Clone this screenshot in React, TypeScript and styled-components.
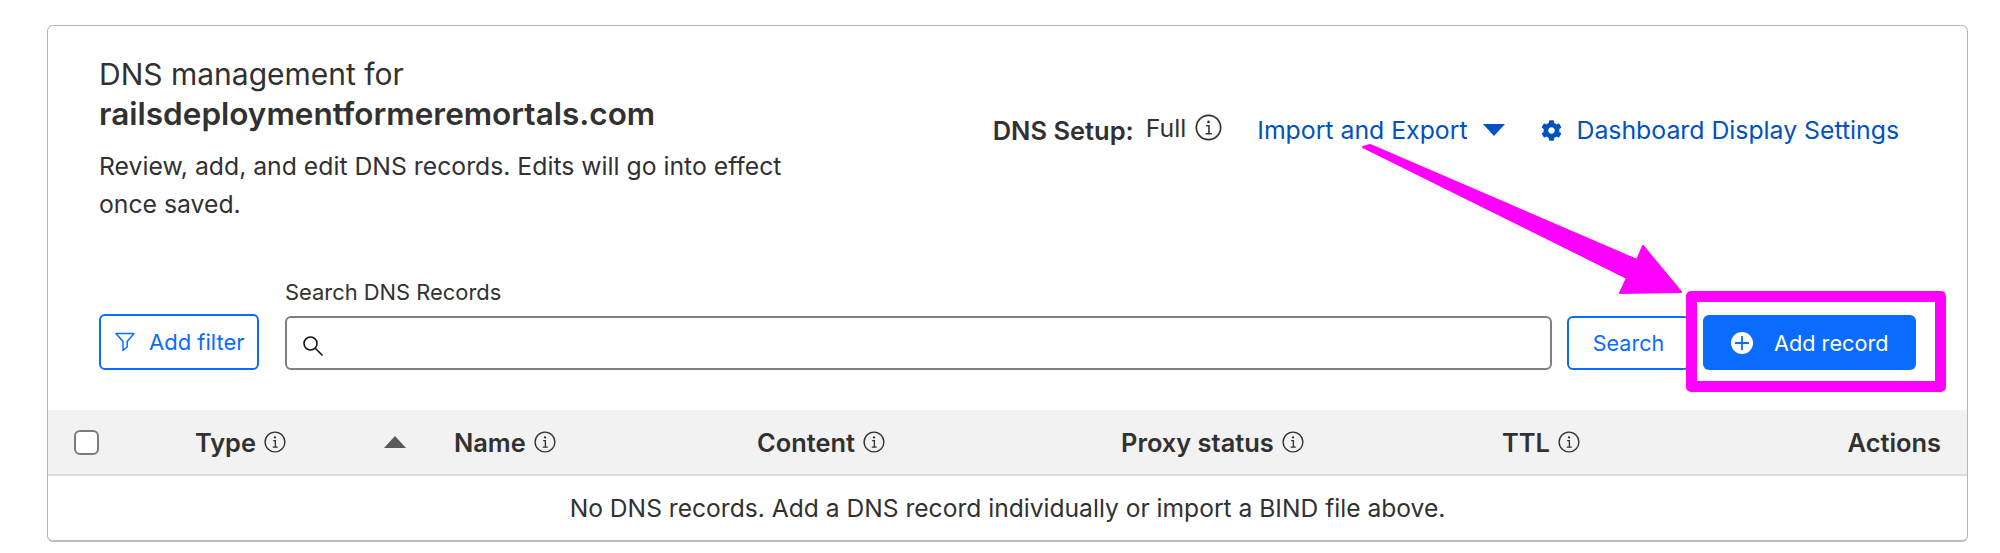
import React from "react";
import styled, { createGlobalStyle } from "styled-components";
import { FaCog } from "react-icons/fa";

const Global = createGlobalStyle`
  html, body { margin: 0; padding: 0; background: #fff; }
  body { font-family: Inter, "Liberation Sans", sans-serif; color: #313131; }
`;
const Page = styled.div`
  position: relative;
  width: 2000px;
  height: 553px;
  padding: 25px 32px 0 47px;
  box-sizing: border-box;
  overflow: hidden;
`;
const Card = styled.section`
  width: 1921px;
  height: 517px;
  box-sizing: border-box;
  border: 1px solid #b4b4b4;
  border-bottom: 2px solid #bcbcbc;
  border-radius: 6px;
  display: flex;
  flex-direction: column;
`;
const Header = styled.header`
  height: 188px;
  box-sizing: border-box;
  padding: 28px 68px 0 51px;
  display: flex;
  justify-content: space-between;
`;
const TitleBlock = styled.div`
  width: 700px;
`;
const Title = styled.h2`
  margin: 0 0 13px;
  font-size: 30px;
  line-height: 40px;
  font-weight: 400;
`;
const Domain = styled.strong`
  display: block;
  font-size: 31.5px;
  font-weight: 600;
`;
const Description = styled.p`
  margin: 0;
  font-size: 24.75px;
  line-height: 38px;
`;
const HeaderActions = styled.div`
  display: flex;
  align-items: center;
  height: 30px;
  margin-top: 61px;
  font-size: 24.8px;
`;
const SetupLabel = styled.span`
  font-size: 25.5px;
  font-weight: 600;
  margin-right: 12px;
`;
const SetupValue = styled.span`
  margin-right: 9px;
  margin-top: -4px;
`;
const SetupInfo = styled.span`
  display: flex;
  margin-right: 35px;
  margin-top: -6px;
`;
const LinkText = styled.a`
  color: #0051c3;
  display: flex;
  align-items: center;
`;
const Caret = styled.span`
  width: 0;
  height: 0;
  margin: 0 36px 0 15px;
  border-left: 11px solid transparent;
  border-right: 11px solid transparent;
  border-top: 12px solid #0051c3;
`;
const GearWrap = styled.span`
  display: flex;
  margin-right: 15px;
`;
const Toolbar = styled.div`
  height: 196px;
  box-sizing: border-box;
  padding: 0 51px;
  display: flex;
  gap: 13px;
  align-items: flex-start;
`;
const FilterButton = styled.button`
  width: 160px;
  height: 56px;
  margin: 100px 13px 0 0;
  background: #fff;
  border: 2px solid #0a6cff;
  border-radius: 6px;
  color: #0a6cff;
  font: 400 22px Inter, sans-serif;
  display: flex;
  align-items: center;
  gap: 14px;
  padding: 0 0 0 14px;
`;
const SearchField = styled.label`
  flex: 1;
  display: flex;
  flex-direction: column;
  font-size: 21.9px;
  margin-top: 60px;
`;
const SearchLabel = styled.span`
  line-height: 36px;
  margin-bottom: 6px;
`;
const SearchBox = styled.span`
  height: 54px;
  box-sizing: border-box;
  border: 2px solid #808080;
  border-radius: 6px;
  display: flex;
  align-items: center;
  padding: 5px 0 0 15px;
`;
const SearchButton = styled.button`
  width: 123px;
  height: 54px;
  margin: 102px 0 0 2px;
  background: #fff;
  border: 2px solid #0a6cff;
  border-radius: 6px;
  color: #0a6cff;
  font: 400 21.5px Inter, sans-serif;
  padding: 0;
`;
const AddButton = styled.button`
  position: relative;
  width: 213px;
  height: 55px;
  margin: 101px 0 0 0;
  background: #0a6cff;
  border: 0;
  border-radius: 6px;
  color: #fff;
  font: 400 21.7px Inter, sans-serif;
  display: flex;
  align-items: center;
  gap: 21px;
  padding: 0 0 0 28px;
`;
const Highlight = styled.span`
  position: absolute;
  inset: -24px -30px -22px -17px;
  border: 11px solid #ff00ff;
  border-radius: 5px;
  pointer-events: none;
`;
const TableHead = styled.div`
  height: 66px;
  box-sizing: border-box;
  background: #f2f2f2;
  border-bottom: 2px solid #dcdcdc;
  padding: 0 26px;
  display: grid;
  grid-template-columns: 121px 259px 303px 364px 381px 1fr auto;
  align-items: center;
  font-size: 25.4px;
  font-weight: 600;
`;
const Check = styled.span`
  width: 25px;
  height: 25px;
  box-sizing: border-box;
  border: 2px solid #7b7b7b;
  border-radius: 6px;
  background: #fff;
`;
const HeadCell = styled.div`
  display: flex;
  align-items: center;
  gap: 8px;
`;
const Sort = styled.span`
  width: 0;
  height: 0;
  margin-left: auto;
  margin-right: 48px;
  border-left: 11px solid transparent;
  border-right: 11px solid transparent;
  border-bottom: 12px solid #595959;
`;
const EmptyRow = styled.div`
  flex: 1;
  display: flex;
  align-items: center;
  justify-content: center;
  font-size: 24.6px;
`;
const ArrowLayer = styled.svg`
  position: absolute;
  left: 0;
  top: 0;
  pointer-events: none;
`;

const Info = ({ size = 22 }: { size?: number }) => (
  <svg width={size} height={size} viewBox="0 0 24 24" fill="none" stroke="#313131" strokeWidth="1.5">
    <circle cx="12" cy="12" r="10.8" />
    <path d="M10 10.5h2.4V17.5M9.5 17.5h5.5" strokeWidth="1.4" />
    <circle cx="12" cy="7" r="1.2" fill="#313131" stroke="none" />
  </svg>
);

const Column = ({ label }: { label: string }) => (
  <HeadCell>
    {label}
    <Info />
  </HeadCell>
);

export default function App() {
  return (
    <Page>
      <Global />
      <Card>
        <Header>
          <TitleBlock>
            <Title>
              DNS management for
              <Domain>railsdeploymentformeremortals.com</Domain>
            </Title>
            <Description>
              Review, add, and edit DNS records. Edits will go into effect once saved.
            </Description>
          </TitleBlock>
          <HeaderActions>
            <SetupLabel>DNS Setup:</SetupLabel>
            <SetupValue>Full</SetupValue>
            <SetupInfo>
              <Info size={27} />
            </SetupInfo>
            <LinkText>Import and Export</LinkText>
            <Caret />
            <GearWrap>
              <FaCog size={21} color="#0051c3" />
            </GearWrap>
            <LinkText>Dashboard Display Settings</LinkText>
          </HeaderActions>
        </Header>
        <Toolbar>
          <FilterButton>
            <svg width="20" height="20" viewBox="0 0 20 20" fill="none" stroke="#0a6cff" strokeWidth="1.5" strokeLinejoin="round">
              <path d="M1 1.5h18L12.2 9.5V15L8 18.5V9.5z" />
            </svg>
            Add filter
          </FilterButton>
          <SearchField>
            <SearchLabel>Search DNS Records</SearchLabel>
            <SearchBox>
              <svg width="22" height="22" viewBox="0 0 22 22" fill="none" stroke="#111" strokeWidth="1.6">
                <circle cx="8.5" cy="8.5" r="6.5" />
                <path d="M13.5 13.5l7 7" />
              </svg>
            </SearchBox>
          </SearchField>
          <SearchButton>Search</SearchButton>
          <AddButton>
            <svg width="22" height="22" viewBox="0 0 22 22">
              <circle cx="11" cy="11" r="11" fill="#fff" />
              <path d="M11 4v14M4 11h14" stroke="#0a6cff" strokeWidth="1.8" />
            </svg>
            Add record
            <Highlight />
          </AddButton>
        </Toolbar>
        <TableHead>
          <Check />
          <HeadCell>
            Type
            <Info />
            <Sort />
          </HeadCell>
          <Column label="Name" />
          <Column label="Content" />
          <Column label="Proxy status" />
          <Column label="TTL" />
          <HeadCell>Actions</HeadCell>
        </TableHead>
        <EmptyRow>No DNS records. Add a DNS record individually or import a BIND file above.</EmptyRow>
      </Card>
      <ArrowLayer width="2000" height="553" viewBox="0 0 2000 553">
        <polygon
          points="1363,147 1370,145 1637,260 1643,246 1681,292 1620,293 1627,278"
          fill="#ff00ff"
          stroke="#ff00ff"
          strokeWidth="2"
          strokeLinejoin="round"
        />
      </ArrowLayer>
    </Page>
  );
}
